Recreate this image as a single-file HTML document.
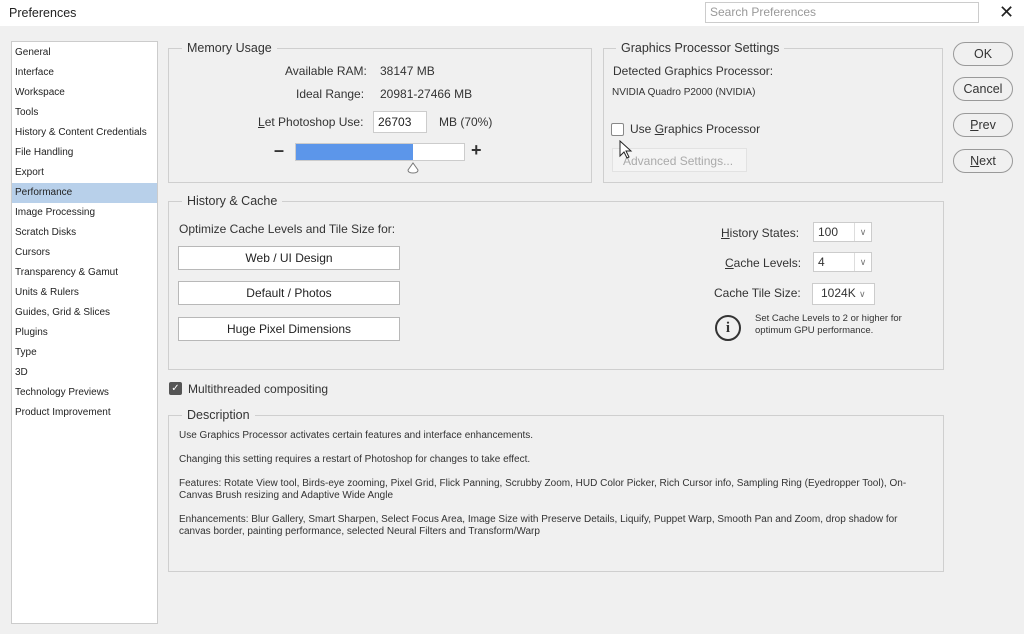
<!DOCTYPE html><html><head><style>
*{box-sizing:border-box}body{margin:0;width:1024px;height:634px;background:#f0f0f0;font-family:"Liberation Sans",sans-serif;color:#333;position:relative;overflow:hidden;font-size:12px}
.a{position:absolute;white-space:nowrap}
.box{position:absolute;border:1px solid #cfcfcf}
.lg{position:absolute;background:#f0f0f0;padding:0 5px;font-size:12.5px;color:#333}
.btn{position:absolute;border:1px solid #b8b8b8;background:#fff;text-align:center;font-size:12px;color:#222}
.pill{position:absolute;border:1px solid #999;border-radius:12px;background:#f0f0f0;text-align:center;font-size:12.5px;line-height:22px;width:60px;left:953px;height:24px}
.sb div{height:20px;line-height:20px;padding-left:3px;font-size:10px;color:#222}
.sel{position:absolute;background:#fff;border:1px solid #ccc;height:20px;line-height:18px;padding-left:4px}
.d{font-size:10px;color:#333}
</style></head><body>
<div class="a" style="left:0;top:0;width:1024px;height:26px;background:#fff"></div>
<div class="a" style="left:9px;top:6px;font-size:12.5px;color:#222">Preferences</div>
<div class="a" style="left:705px;top:2px;width:274px;height:21px;border:1px solid #ccc;background:#fff;color:#999;padding:2px 4px;font-size:12px">Search Preferences</div>
<div class="a" style="left:999px;top:2px;font-size:18px;color:#222">✕</div>
<div class="a sb" style="left:11px;top:41px;width:147px;height:583px;background:#fff;border:1px solid #ccc;padding-top:1px">
<div>General</div><div>Interface</div><div>Workspace</div><div>Tools</div><div>History &amp; Content Credentials</div><div>File Handling</div><div>Export</div><div style="background:#b8d0ea">Performance</div><div>Image Processing</div><div>Scratch Disks</div><div>Cursors</div><div>Transparency &amp; Gamut</div><div>Units &amp; Rulers</div><div>Guides, Grid &amp; Slices</div><div>Plugins</div><div>Type</div><div>3D</div><div>Technology Previews</div><div>Product Improvement</div></div>

<div class="box" style="left:168px;top:48px;width:424px;height:135px"></div><div class="lg" style="left:182px;top:41px">Memory Usage</div>
<div class="a" style="left:285px;top:64px">Available RAM:</div><div class="a" style="left:380px;top:64px">38147 MB</div>
<div class="a" style="left:296px;top:87px">Ideal Range:</div><div class="a" style="left:380px;top:87px">20981-27466 MB</div>
<div class="a" style="left:258px;top:115px"><u>L</u>et Photoshop Use:</div>
<div class="a" style="left:373px;top:111px;width:54px;height:22px;background:#fff;border:1px solid #ccc;padding:3px 4px;color:#222">26703</div>
<div class="a" style="left:439px;top:115px">MB (70%)</div>
<div class="a" style="left:274px;top:141px;font-size:18px;font-weight:bold;line-height:18px">–</div>
<div class="a" style="left:295px;top:143px;width:170px;height:18px;background:#fff;border:1px solid #ccc"><div style="width:117px;height:16px;background:#5c96ea"></div></div>
<div class="a" style="left:471px;top:140px;font-size:18px;font-weight:bold;line-height:20px">+</div>
<svg class="a" style="left:406px;top:162px" width="14" height="12"><path d="M7 1 L12 8 Q12 11 7 11 Q2 11 2 8 Z" fill="#fff" stroke="#777"/></svg>

<div class="box" style="left:603px;top:48px;width:340px;height:135px"></div><div class="lg" style="left:616px;top:41px">Graphics Processor Settings</div>
<div class="a" style="left:613px;top:64px">Detected Graphics Processor:</div>
<div class="a" style="left:612px;top:87px;font-size:10px">NVIDIA Quadro P2000 (NVIDIA)</div>
<div class="a" style="left:611px;top:123px;width:13px;height:13px;border:1px solid #888;border-radius:2px;background:#fff"></div>
<div class="a" style="left:630px;top:122px">Use <u>G</u>raphics Processor</div>
<div class="a" style="left:612px;top:148px;width:135px;height:24px;border:1px solid #e2e2e2;background:#f4f4f4;color:#aaa;padding:5px 10px">Advanced Settings...</div>
<svg class="a" style="left:619px;top:140px" width="14" height="20"><path d="M1 1 L1 16 L5 12 L8 18 L10 17 L7 11 L12 11 Z" fill="#fff" stroke="#222"/></svg>

<div class="pill" style="top:42px">OK</div><div class="pill" style="top:77px">Cancel</div>
<div class="pill" style="top:113px"><u>P</u>rev</div><div class="pill" style="top:149px"><u>N</u>ext</div>

<div class="box" style="left:168px;top:201px;width:776px;height:169px"></div><div class="lg" style="left:182px;top:194px">History &amp; Cache</div>
<div class="a" style="left:179px;top:222px">Optimize Cache Levels and Tile Size for:</div>
<div class="btn" style="left:178px;top:246px;width:222px;height:24px;line-height:22px">Web / UI Design</div>
<div class="btn" style="left:178px;top:281px;width:222px;height:24px;line-height:22px">Default / Photos</div>
<div class="btn" style="left:178px;top:317px;width:222px;height:24px;line-height:22px">Huge Pixel Dimensions</div>
<div class="a" style="left:721px;top:226px"><u>H</u>istory States:</div>
<div class="sel" style="left:813px;top:222px;width:59px">100<span style="position:absolute;left:40px;top:0;border-left:1px solid #ddd;width:17px;text-align:center;color:#777;font-size:9px">∨</span></div>
<div class="a" style="left:725px;top:256px"><u>C</u>ache Levels:</div>
<div class="sel" style="left:813px;top:252px;width:59px">4<span style="position:absolute;left:40px;top:0;border-left:1px solid #ddd;width:17px;text-align:center;color:#777;font-size:9px">∨</span></div>
<div class="a" style="left:714px;top:286px">Cache Tile Size:</div>
<div class="sel" style="left:812px;top:283px;width:63px;height:22px;padding-left:8px">1024K <span style="color:#777;font-size:9px">∨</span></div>
<div class="a" style="left:715px;top:315px;width:26px;height:26px;border:2px solid #333;border-radius:50%;text-align:center;font-weight:bold;font-size:15px;line-height:22px;font-family:'Liberation Serif',serif">i</div>
<div class="a" style="left:755px;top:313px;font-size:9.5px;line-height:12px">Set Cache Levels to 2 or higher for<br>optimum GPU performance.</div>

<div class="a" style="left:169px;top:382px;width:13px;height:13px;background:#555;border-radius:2px;color:#fff;font-size:10px;line-height:13px;text-align:center">✓</div>
<div class="a" style="left:188px;top:382px">Multithreaded compositing</div>

<div class="box" style="left:168px;top:415px;width:776px;height:157px"></div><div class="lg" style="left:182px;top:408px">Description</div>
<div class="a d" style="left:179px;top:430px">Use Graphics Processor activates certain features and interface enhancements.</div>
<div class="a d" style="left:179px;top:454px">Changing this setting requires a restart of Photoshop for changes to take effect.</div>
<div class="a d" style="left:179px;top:478px;line-height:12px">Features: Rotate View tool, Birds-eye zooming, Pixel Grid, Flick Panning, Scrubby Zoom, HUD Color Picker, Rich Cursor info, Sampling Ring (Eyedropper Tool), On-<br>Canvas Brush resizing and Adaptive Wide Angle</div>
<div class="a d" style="left:179px;top:514px;line-height:12px">Enhancements: Blur Gallery, Smart Sharpen, Select Focus Area, Image Size with Preserve Details, Liquify, Puppet Warp, Smooth Pan and Zoom, drop shadow for<br>canvas border, painting performance, selected Neural Filters and Transform/Warp</div>
</body></html>
